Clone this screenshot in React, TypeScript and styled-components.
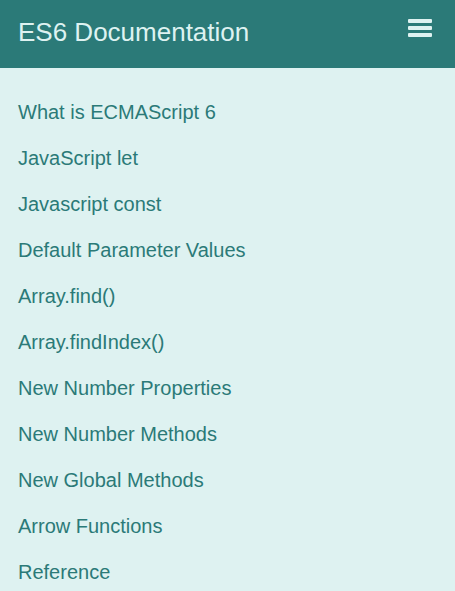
import React from "react";
import styled, { createGlobalStyle } from "styled-components";

const GlobalStyle = createGlobalStyle`
  html, body {
    margin: 0;
    padding: 0;
    background: #def2f1;
    font-family: "Liberation Sans", Arial, sans-serif;
  }
`;

const links = [
  "What is ECMAScript 6",
  "JavaScript let",
  "Javascript const",
  "Default Parameter Values",
  "Array.find()",
  "Array.findIndex()",
  "New Number Properties",
  "New Number Methods",
  "New Global Methods",
  "Arrow Functions",
  "Reference",
];

const Header = styled.header`
  height: 68px;
  background: #2b7a78;
  display: flex;
  align-items: center;
  justify-content: space-between;
  padding: 0 23px 4px 18px;
  box-sizing: border-box;
`;

const Title = styled.h1`
  margin: 0;
  font-size: 26px;
  font-weight: 400;
  color: #def2f1;
`;

const MenuButton = styled.button`
  background: none;
  border: none;
  padding: 0;
  margin-top: -8px;
  cursor: pointer;
  display: flex;
`;

const Nav = styled.nav`
  padding: 21px 18px 0;
`;

const NavLink = styled.a`
  display: block;
  line-height: 46px;
  font-size: 20px;
  color: #2b7a78;
  text-decoration: none;
`;

const BarsIcon = () => (
  <svg width="24" height="20" viewBox="0 0 24 20" fill="#def2f1">
    <rect x="0" y="1" width="24" height="4" rx="1" />
    <rect x="0" y="8" width="24" height="4" rx="1" />
    <rect x="0" y="15" width="24" height="4" rx="1" />
  </svg>
);

export default function App() {
  return (
    <>
      <GlobalStyle />
      <Header>
        <Title>ES6 Documentation</Title>
        <MenuButton aria-label="menu">
          <BarsIcon />
        </MenuButton>
      </Header>
      <Nav>
        {links.map((l) => (
          <NavLink key={l} href="#">
            {l}
          </NavLink>
        ))}
      </Nav>
    </>
  );
}
